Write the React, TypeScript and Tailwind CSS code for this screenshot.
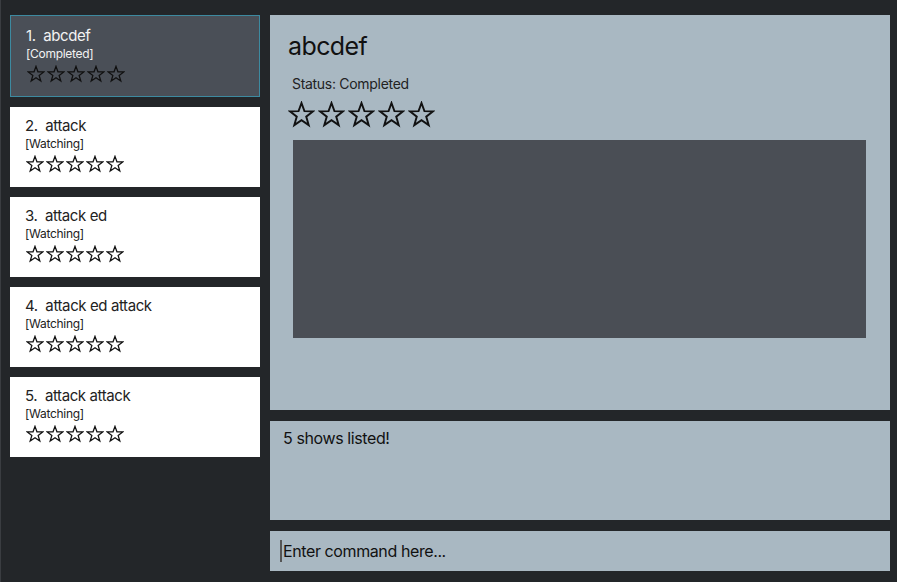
import type { ReactNode } from "react";

type Show = { name: string; status: string };

const shows: Show[] = [
  { name: "abcdef", status: "Completed" },
  { name: "attack", status: "Watching" },
  { name: "attack ed", status: "Watching" },
  { name: "attack ed attack", status: "Watching" },
  { name: "attack attack", status: "Watching" },
];

function Star({ size }: { size: number }) {
  return (
    <svg width={size} height={size} viewBox="0 0 24 24" fill="none" stroke="#111" strokeWidth={1.7} strokeLinejoin="miter">
      <polygon points="12,1.8 14.6,9 22.3,9.2 16.2,13.9 18.4,21.4 12,17 5.6,21.4 7.8,13.9 1.7,9.2 9.4,9" />
    </svg>
  );
}

function Stars({ size, gap }: { size: number; gap: string }) {
  return (
    <div className={`flex ${gap}`}>
      {[0, 1, 2, 3, 4].map((i) => (
        <Star key={i} size={size} />
      ))}
    </div>
  );
}

function Panel({ className, children }: { className: string; children?: ReactNode }) {
  return <div className={`bg-[#a9b8c2] ${className}`}>{children}</div>;
}

export default function App() {
  return (
    <div
      className="flex h-[582px] w-[897px] border-l border-[#3a3d41] bg-[#232629]"
      style={{ fontFamily: "Inter, 'Liberation Sans', sans-serif" }}
    >
      <div className="flex w-[259px] flex-col gap-[10px] pl-[9px] pt-[15px]">
        {shows.map((s, i) => {
          const selected = i === 0;
          return (
            <div
              key={s.name}
              className={
                selected
                  ? "h-[82px] border border-[#3d8aa0] bg-[#4a4f57] px-[15px] pt-[10px] text-[#f2f2f2]"
                  : "h-[80px] bg-white px-[15px] pt-[9px] text-[#222]"
              }
            >
              <div className="text-[15px] leading-[20px] tracking-[-0.4px]">
                {i + 1}.&nbsp; {s.name}
              </div>
              <div className="text-[12px] leading-[16px] tracking-[-0.3px]">[{s.status}]</div>
              <div className="ml-[1px] mt-[3px]">
                <Stars size={18} gap="gap-[2px]" />
              </div>
            </div>
          );
        })}
      </div>

      <div className="ml-[10px] flex w-[620px] flex-col gap-[11px] pt-[15px]">
        <Panel className="h-[395px] pl-[18px] pt-[15px]">
          <div className="text-[25px] leading-[32px] text-[#111] tracking-[-0.6px]">abcdef</div>
          <div className="ml-[4px] mt-[13px] text-[14px] leading-[18px] text-[#222] tracking-[-0.3px]">
            Status: Completed
          </div>
          <div className="mt-[8px]">
            <Stars size={27} gap="gap-[3px]" />
          </div>
          <div className="ml-[5px] mt-[12px] h-[198px] w-[573px] bg-[#4a4e55]" />
        </Panel>
        <Panel className="h-[99px] pl-[13px] pt-[7px]">
          <div className="text-[16px] leading-[20px] text-[#111] tracking-[-0.4px]">5 shows listed!</div>
        </Panel>
        <Panel className="flex h-[40px] items-center pl-[10px]">
          <span className="mr-px h-[22px] w-[2px] bg-[#555]" />
          <span className="text-[16px] text-[#111] tracking-[-0.4px]">Enter command here...</span>
        </Panel>
      </div>
    </div>
  );
}
